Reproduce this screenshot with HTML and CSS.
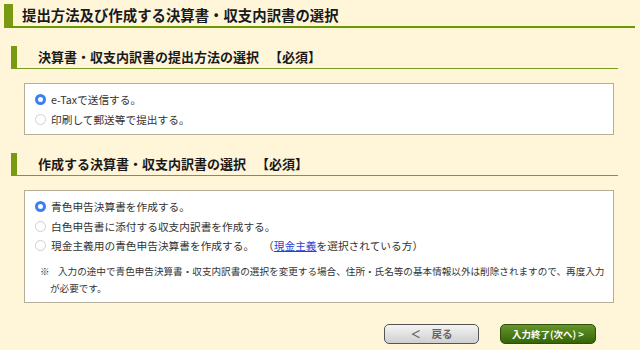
FILE: index.html
```html
<!DOCTYPE html>
<html lang="ja">
<head>
    <meta charset="UTF-8">
    <meta name="viewport" content="width=device-width, initial-scale=1.0">
    <title>提出方法及び作成する決算書・収支内訳書の選択</title>
    <link rel="stylesheet" href="styles.css">
</head>
<body>
    <div class="page">
        <h1 class="page-title">提出方法及び作成する決算書・収支内訳書の選択</h1>

        <!-- 提出方法 -->
        <h2 class="section-title">決算書・収支内訳書の提出方法の選択<span class="req">【必須】</span></h2>
        <div class="panel">
            <label class="choice"><span class="radio checked"></span>e-Taxで送信する。</label>
            <label class="choice"><span class="radio"></span>印刷して郵送等で提出する。</label>
        </div>

        <!-- 作成する決算書 -->
        <h2 class="section-title">作成する決算書・収支内訳書の選択<span class="req">【必須】</span></h2>
        <div class="panel">
            <label class="choice"><span class="radio checked"></span>青色申告決算書を作成する。</label>
            <label class="choice"><span class="radio"></span>白色申告書に添付する収支内訳書を作成する。</label>
            <label class="choice"><span class="radio"></span>現金主義用の青色申告決算書を作成する。<span class="aside">（<a href="#">現金主義</a>を選択されている方）</span></label>
            <div class="note">
                <span class="mark">※</span>
                <p>入力の途中で青色申告決算書・収支内訳書の選択を変更する場合、住所・氏名等の基本情報以外は削除されますので、再度入力が必要です。</p>
            </div>
        </div>

        <div class="actions">
            <button class="btn btn-back">＜　戻る</button>
            <button class="btn btn-next">入力終了(次へ) &gt;</button>
        </div>
    </div>
</body>
</html>
```

FILE: styles.css
```css
/* Base */
body {
    margin: 0;
    background-color: #fff6da;
    color: #222;
    font-family: "Noto Sans CJK JP", "Noto Sans", sans-serif;
}

.page {
    display: flex;
    flex-direction: column;
    padding: 4px 5px 0 4px;
}

/* Headings */
.page-title {
    margin: 0;
    height: 22px;
    line-height: 21px;
    padding-left: 9px;
    border-left: 9px solid #789a12;
    border-bottom: 2px solid #6a9800;
    font-size: 14.4px;
    font-weight: bold;
    color: #1a1a1a;
}

.section-title {
    margin: 18px 17px 0 7px;
    height: 22px;
    line-height: 22px;
    padding-left: 21px;
    border-left: 6px solid #789a12;
    border-bottom: 1.5px solid #7a9c20;
    font-size: 13px;
    font-weight: bold;
    color: #1a1a1a;
}

.section-title .req {
    margin-left: 10px;
}

/* Panels */
.panel {
    margin: 14px 21px 0 20px;
    padding: 6px 4px 5px 10px;
    background-color: #fff;
    border: 1px solid #b4ad98;
}

.choice {
    display: flex;
    align-items: center;
    height: 19.5px;
    font-size: 10.7px;
    color: #333;
}

.choice .aside {
    margin-left: 9px;
}

.choice a {
    color: #2a3fd0;
    text-decoration: underline;
}

.radio {
    width: 9px;
    height: 9px;
    margin-right: 5px;
    border: 1px solid #d0d0d0;
    border-radius: 50%;
    background-color: #fff;
    flex-shrink: 0;
}

.radio.checked {
    width: 5px;
    height: 5px;
    border: 3px solid #3a7ff5;
    background-color: #fff;
}

/* 注意書き: 2行目は※の少し右から始まる */
.note {
    position: relative;
    margin: 7px 0 0 15px;
    font-size: 9.6px;
    line-height: 17px;
    color: #333;
}

.note .mark {
    position: absolute;
    left: -10px;
    top: 0;
}

.note p {
    margin: 0;
    text-indent: 8px;
}

/* Buttons */
.actions {
    display: flex;
    justify-content: flex-end;
    gap: 21px;
    margin-top: 21px;
    padding-right: 39px;
}

.btn {
    height: 20px;
    border-radius: 5px;
    font-family: "Noto Sans CJK JP", "Noto Sans", sans-serif;
    font-weight: bold;
    font-size: 10px;
    padding: 0;
    cursor: pointer;
}

.btn-back {
    width: 95px;
    border: 1px solid #555;
    background: linear-gradient(#f4f4f4, #cfcfcf);
    color: #666;
    font-size: 10.5px;
}

.btn-next {
    width: 96px;
    border: 1px solid #2e4e08;
    background: linear-gradient(#64962a, #356408);
    color: #fff;
    font-size: 9.5px;
}
```
